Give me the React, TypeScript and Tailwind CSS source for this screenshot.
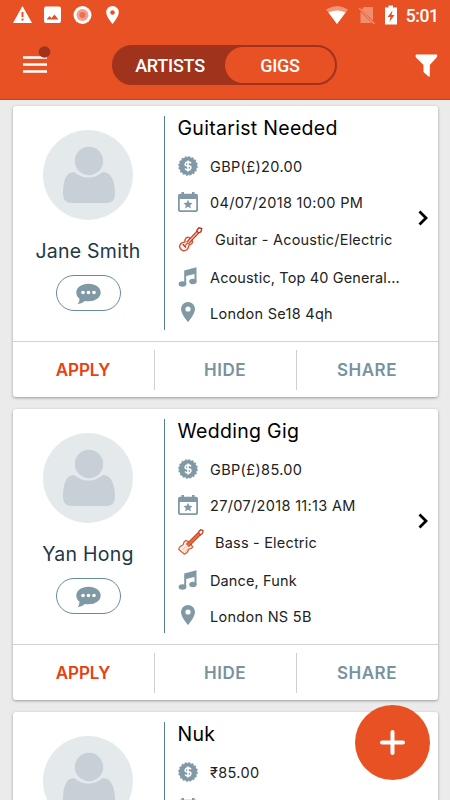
import type { ReactNode } from "react";
import clsx from "clsx";

type Gig = {
  id: string;
  artist?: string;
  title: string;
  price: string;
  date?: string;
  instrument?: string;
  bass?: boolean;
  genres?: string;
  location?: string;
};

export default function App() {
  return (
    <div className="relative flex h-[800px] w-[450px] flex-col overflow-hidden bg-[#ebebeb] font-['Inter',sans-serif]">
      <Header />
      <main className="flex flex-col gap-3 px-[12.5px] pt-1.5">
        {gigs.map((gig) => (
          <GigCard key={gig.id} gig={gig} />
        ))}
      </main>
      <button className="absolute left-[355px] top-[705px] flex size-[75px] items-center justify-center rounded-full bg-[#e85124]">
        <svg viewBox="0 0 25 25" className="size-[25px]">
          <path d="M12.5 2v21M2 12.5h21" stroke="#fff" strokeWidth="4" strokeLinecap="round" />
        </svg>
      </button>
    </div>
  );
}

function Header() {
  return (
    <header className="h-[100px] shrink-0 border-b border-[#df3a0d] bg-[#e85124] font-['Roboto',sans-serif] text-white">
      <div className="flex h-[30px] items-center pl-[13px] pr-[11.5px]">
        <svg viewBox="0 0 110 20" className="h-5 w-[110px]">
          <path fillRule="evenodd" d="M9.5 1 19 18H0ZM8.500 7v5h2V7Zm0 6.500v2h2v-2Z" fill="#fff" />
          <path
            fillRule="evenodd"
            d="M33 1.500h13a2 2 0 0 1 2 2v12.500a2 2 0 0 1-2 2H33a2 2 0 0 1-2-2V3.500a2 2 0 0 1 2-2ZM33.500 14.500H45.500L41.500 9.500 38.500 13 36.500 11Z"
            fill="#fff"
          />
          <circle cx="69.500" cy="10" r="9" fill="#fff" />
          <circle cx="69.500" cy="10" r="6" fill="#f3a08a" />
          <circle cx="69.500" cy="10" r="3" fill="#ec7150" />
          <path
            fillRule="evenodd"
            d="M99.500 1a6.300 6.300 0 0 0-6.300 6.300c0 4.500 6.300 11.700 6.300 11.700s6.300-7.200 6.300-11.700A6.300 6.300 0 0 0 99.500 1Zm0 4.200a2.300 2.300 0 1 1 0 4.600 2.300 2.300 0 0 1 0-4.600Z"
            fill="#fff"
          />
        </svg>
        <svg viewBox="0 0 72 20" className="ml-auto h-5 w-[72px]">
          <path d="M0 4.500Q11 -2.500 22 4.500L11 19Z" fill="#f29578" />
          <path d="M2.500 7.500Q11 3.500 19.500 7.500L11 19Z" fill="#fff" />
          <path d="M38 2h9v13.500L35.500 4.500ZM34.500 6.500 46 18H34.500Z" fill="#f08e70" />
          <path d="m33 3 15.500 16" stroke="#f08e70" strokeWidth="1.400" />
          <path
            fillRule="evenodd"
            d="M62.500 .500h4.500v2h4v17H59v-17h3.500ZM66.500 5.500 61.500 12H64.500L63.500 17 68.500 10H65.500Z"
            fill="#fff"
          />
        </svg>
        <span className="ml-2 pt-px text-[17.500px] font-medium leading-5 tracking-[-0.400px]">5:01</span>
      </div>
      <div className="flex h-[70px] items-center pl-[23px] pr-3">
        <svg viewBox="0 0 30 30" className="mb-2.5 size-[30px]">
          <path d="M0 12.500h24M0 19.500h24M0 26.500h24" stroke="#fff" strokeWidth="2.600" />
          <circle cx="21.500" cy="7" r="5.800" fill="#a0331c" />
        </svg>
        <div className="ml-[59px] flex h-10 w-[225px] rounded-full border-2 border-[#a0331c] bg-[#a0331c] text-[18px] font-medium leading-[38px] tracking-[-0.250px]">
          <span className="flex-1 pl-px text-center">ARTISTS</span>
          <span className="w-[110px] rounded-full bg-[#e85124] text-center">GIGS</span>
        </div>
        <svg viewBox="0 0 23 23" className="ml-auto size-[23px]">
          <path d="M1 .500h21q.800 1.500-.500 3L14.800 11v11.500h-1.300L8.500 18v-7L1 3.500Q0 2 1 .500Z" fill="#fff" />
        </svg>
      </div>
    </header>
  );
}

function GigCard({ gig }: { gig: Gig }) {
  return (
    <article className="h-[291px] w-[425px] shrink-0 rounded-[3px] bg-white shadow-[0_1px_3px_rgba(0,0,0,0.35)]">
      <div className="flex h-[235px] pb-[11px] pt-2.5">
        <div className="flex w-[152px] flex-col items-center border-r border-[#557f90] pt-3.5">
          <Avatar />
          <h3 className="mt-[19px] h-6 whitespace-nowrap text-[19.500px] leading-6 tracking-[0.250px] text-[#223746]">
            {gig.artist}
          </h3>
          <button className="mt-3 flex h-9 w-[65px] items-center justify-center rounded-full border border-[#668b99]">
            <svg viewBox="0 0 26 22" className="mt-0.5 h-[22px] w-[26px]">
              <path
                d="M13.500.700c7 0 12.200 3.800 12.200 8.800s-5.200 8.800-12.200 8.800q-2 0-3.700-.400Q7 20.800 2.500 21.300q2.200-2.500 2-5.500Q1.300 13.300 1.300 9.500c0-5 5.200-8.800 12.200-8.800Z"
                fill="#7f99a5"
              />
              <g fill="#fff">
                <circle cx="8" cy="9.500" r="1.800" />
                <circle cx="13.500" cy="9.500" r="1.800" />
                <circle cx="19" cy="9.500" r="1.800" />
              </g>
            </svg>
          </button>
        </div>
        <div className="flex w-60 flex-col pl-[13px]">
          <h2 className="mb-1.5 h-[26px] shrink-0 whitespace-nowrap text-[19.500px] leading-6 tracking-[0.300px] text-black">
            {gig.title}
          </h2>
          <Row icon={<PriceIcon />} className="tracking-[0.350px]">{gig.price}</Row>
          <Row icon={<CalendarIcon />} className="tracking-[0.330px]">{gig.date}</Row>
          <div className="flex h-[39px] shrink-0 items-center whitespace-nowrap pb-px text-[14.500px] tracking-[0.200px] text-[#222]">
            <span className="w-[37.500px]">
              <GuitarIcon bass={gig.bass} />
            </span>
            <span className="pt-px">{gig.instrument}</span>
          </div>
          <Row icon={<MusicIcon />} className="tracking-[0.130px]">{gig.genres}</Row>
          <Row icon={<PinIcon />} className="tracking-[0.280px]">{gig.location}</Row>
        </div>
        <div className="flex items-center pl-3">
          <svg viewBox="0 0 12 16" className="mt-[-10px] h-4 w-3">
            <path d="m2.500 1.500 6.500 6.500-6.500 6.500" fill="none" stroke="#000" strokeWidth="2.800" />
          </svg>
        </div>
      </div>
      {gig.artist && (
        <div className="flex h-14 items-center border-t border-[#d2d2d2] text-center text-[17px] font-semibold leading-10 tracking-[0.500px] text-[#78929e]">
          <span className="flex-1 tracking-[-0.100px] text-[#e8400f]">APPLY</span>
          <span className="flex-1 border-x border-[#cfcfcf]">HIDE</span>
          <span className="flex-1">SHARE</span>
        </div>
      )}
    </article>
  );
}

function Row({ icon, className, children }: { icon: ReactNode; className?: string; children?: ReactNode }) {
  return (
    <div className={clsx("flex h-9 shrink-0 items-center whitespace-nowrap text-[14.500px] text-[#222]", className)}>
      <span className="w-[32.500px] text-[#8199a5]">{icon}</span>
      <span className="pt-0.5">{children}</span>
    </div>
  );
}

function Avatar() {
  return (
    <svg viewBox="0 0 90 90" className="size-[90px]">
      <circle cx="45" cy="45" r="45" fill="#e4eaec" />
      <path
        d="M31 42q14 11 29 0c8 0 12 9 12 22q0 9-9 9H29q-9 0-9-9c0-13 3-22 11-22Z"
        fill="#c8d0d7"
      />
      <circle cx="46" cy="31" r="16.300" fill="#e4eaec" />
      <circle cx="46" cy="31" r="14.200" fill="#c8d0d7" />
    </svg>
  );
}

function PriceIcon() {
  return (
    <svg viewBox="0 0 20 20" className="size-5">
      <circle cx="10" cy="10" r="9" fill="currentColor" />
      <circle cx="10" cy="10" r="9" fill="none" stroke="currentColor" strokeWidth="1.600" strokeDasharray="2 1.530" />
      <path
        d="M12.900 7.400Q12.200 5.900 10 5.900T7.200 7.900t2.800 2 2.800 2.200-2.800 2-2.900-1.600M10 4.400v11.200"
        fill="none"
        stroke="#fff"
        strokeWidth="1.600"
      />
    </svg>
  );
}

function CalendarIcon() {
  return (
    <svg viewBox="0 0 20 20" className="size-5">
      <path
        fillRule="evenodd"
        d="M3.500 0H6v1.800h8V0h2.500v1.800H18q2 0 2 2V18q0 2-2 2H2q-2 0-2-2V3.800q0-2 2-2h1.500ZM1.800 7v10.500q0 .700.700.700h15q.700 0 .700-.700V7Z"
        fill="currentColor"
      />
      <path d="m10 7.800 1.400 3 3.200.300-2.400 2.100.700 3.200-2.900-1.600-2.900 1.600.700-3.200-2.400-2.100 3.200-.300Z" fill="currentColor" />
    </svg>
  );
}

function MusicIcon() {
  return (
    <svg viewBox="0 0 20 20" className="size-5">
      <path d="M6.200 3.500 18.500.200v14.300h-2V7L8.200 9v8h-2Z" fill="currentColor" />
      <ellipse cx="4.500" cy="17" rx="3.900" ry="2.700" fill="currentColor" />
      <ellipse cx="14.900" cy="14.500" rx="3.700" ry="2.700" fill="currentColor" />
    </svg>
  );
}

function PinIcon() {
  return (
    <svg viewBox="0 0 20 20" className="mb-0.5 size-5">
      <path
        fillRule="evenodd"
        d="M10 0a7 7 0 0 0-7 7c0 5.200 7 13 7 13s7-7.800 7-13a7 7 0 0 0-7-7Zm0 4.400a2.600 2.600 0 1 1 0 5.200 2.600 2.600 0 0 1 0-5.200Z"
        fill="currentColor"
      />
    </svg>
  );
}

function GuitarIcon({ bass }: { bass?: boolean }) {
  if (bass) {
    return (
      <svg viewBox="0 0 26 26" className="size-[26px]">
        <path
          d="M7.500 11.500Q9.500 12 11 13l2 2q.500 1.800 1.800 3-1 1.800-4.200 2.200-.500 3.500-4.100 5L.800 20.500Q1 17.200 5 16q.300-3 2.500-4.500Z"
          fill="#fdeee8"
          stroke="#d9603f"
          strokeWidth="1.300"
          strokeLinejoin="round"
        />
        <path d="m9.500 16.500 12-12" stroke="#b8371b" strokeWidth="4.200" />
        <path d="m9.500 16.500 12-12" stroke="#ea6a3c" strokeWidth="2.600" />
        <path d="m20.500 3 2-2.200 2.500.700-.300 2.800L22.500 6Z" fill="#fff" stroke="#c63a1c" strokeWidth="1.200" />
        <path d="m4.500 21 4-4M7 22.500l3-3" stroke="#f3b5a2" />
      </svg>
    );
  }
  return (
    <svg viewBox="0 0 26 26" className="size-[26px]">
      <path
        d="M8.200 11.800q2-1.600 4.600.900t1.200 4.600q-1.300 1.500-2.900 1.700-.400 2.900-2 4.500-3.200 2.600-6 0t-.300-5.900q1.600-1.400 4-1.700.1-2.600 1.400-4.100Z"
        fill="#fff"
        stroke="#dc552e"
        strokeWidth="1.500"
      />
      <path d="m9.500 17 10.500-11" stroke="#b83319" strokeWidth="3.600" />
      <path d="m9.500 17 10.500-11" stroke="#f5b6a0" strokeWidth="1.500" />
      <path d="m18.800 4.500 2-2.700 2.900.700-.700 3.200L20.500 7Z" fill="#fff" stroke="#b83319" strokeWidth="1.300" />
      <path d="m4.800 18.300 3.200 3.200" stroke="#b83319" strokeWidth="1.500" />
      <path d="m7 19.500 2.800-2.800" stroke="#e76537" strokeWidth="1.600" />
    </svg>
  );
}

const gigs: Gig[] = [
  {
    id: "0",
    artist: "Jane Smith",
    title: "Guitarist Needed",
    price: "GBP(£)20.00",
    date: "04/07/2018 10:00 PM",
    instrument: "Guitar - Acoustic/Electric",
    genres: "Acoustic, Top 40 General...",
    location: "London Se18 4qh",
  },
  {
    id: "1",
    artist: "Yan Hong",
    title: "Wedding Gig",
    price: "GBP(£)85.00",
    date: "27/07/2018 11:13 AM",
    instrument: "Bass - Electric",
    bass: true,
    genres: "Dance, Funk",
    location: "London NS 5B",
  },
  {
    id: "2",
    title: "Nuk",
    price: "₹85.00",
  },
];
